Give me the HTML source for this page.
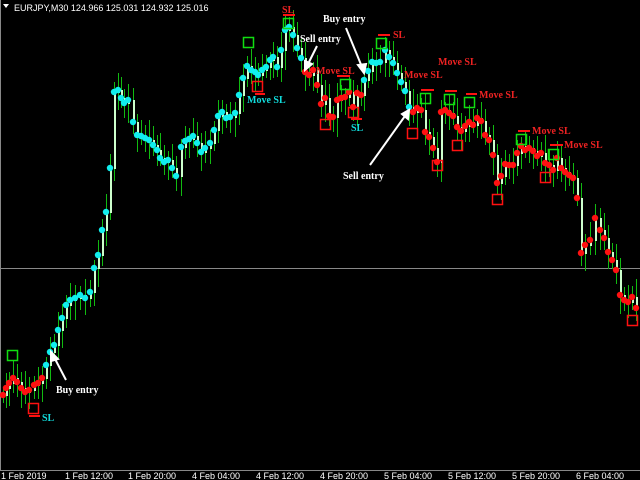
<!DOCTYPE html>
<html><head><meta charset="utf-8"><style>
html,body{margin:0;padding:0;background:#000;width:640px;height:480px;overflow:hidden}
svg{display:block}
.ax{font:9px "Liberation Sans",sans-serif;fill:#fff}
.lb{font:bold 10px "Liberation Serif",serif}
</style></head><body>
<svg id="s" width="640" height="480" xmlns="http://www.w3.org/2000/svg">
<rect width="640" height="480" fill="#000"/>
<line x1="0.5" y1="0" x2="0.5" y2="470" stroke="#888"/>
<line x1="0" y1="470.5" x2="640" y2="470.5" stroke="#888"/>
<line x1="0" y1="268.5" x2="640" y2="268.5" stroke="#888"/>
<g id="c"></g>
<polygon points="3,4 9,4 6,8" fill="#fff"/>
<text x="14" y="11" class="ax">EURJPY,M30  124.966 125.031 124.932 125.016</text>
<g class="ax">
<text x="1" y="479">1 Feb 2019</text><text x="65" y="479">1 Feb 12:00</text><text x="128" y="479">1 Feb 20:00</text>
<text x="192" y="479">4 Feb 04:00</text><text x="256" y="479">4 Feb 12:00</text><text x="320" y="479">4 Feb 20:00</text>
<text x="384" y="479">5 Feb 04:00</text><text x="448" y="479">5 Feb 12:00</text><text x="512" y="479">5 Feb 20:00</text>
<text x="576" y="479">6 Feb 04:00</text>
</g>
<g fill="none" stroke="#1d1" stroke-width="1.5">
<rect x="7.5" y="350.5" width="10" height="10"/><rect x="243.5" y="37.5" width="10" height="10"/><rect x="283.5" y="18.5" width="10" height="10"/>
<rect x="340.5" y="79.5" width="10" height="10"/><rect x="376.5" y="38.5" width="10" height="10"/><rect x="420.5" y="93.5" width="10" height="10"/>
<rect x="444.5" y="94.5" width="10" height="10"/><rect x="464.5" y="97.5" width="10" height="10"/><rect x="516.5" y="134.5" width="10" height="10"/>
<rect x="548.5" y="149.5" width="10" height="10"/>
</g>
<g fill="none" stroke="#f11" stroke-width="1.5">
<rect x="28.5" y="403.5" width="10" height="10"/><rect x="252.5" y="81.5" width="10" height="10"/><rect x="320.5" y="119.5" width="10" height="10"/>
<rect x="348.5" y="107.5" width="10" height="10"/><rect x="407.5" y="128.5" width="10" height="10"/><rect x="432.5" y="160.5" width="10" height="10"/>
<rect x="452.5" y="140.5" width="10" height="10"/><rect x="492.5" y="194.5" width="10" height="10"/><rect x="540.5" y="172.5" width="10" height="10"/>
<rect x="627.5" y="315.5" width="10" height="10"/>
</g>
<g stroke="#f11" stroke-width="2">
<line x1="29" y1="416" x2="40" y2="416"/><line x1="255" y1="94" x2="265" y2="94"/><line x1="283" y1="15" x2="295" y2="15"/>
<line x1="337" y1="76" x2="350" y2="76"/><line x1="351" y1="119" x2="362" y2="119"/><line x1="378" y1="35" x2="390" y2="35"/>
<line x1="421" y1="90" x2="434" y2="90"/><line x1="445" y1="91" x2="457" y2="91"/><line x1="466" y1="94" x2="477" y2="94"/>
<line x1="518" y1="131" x2="530" y2="131"/><line x1="550" y1="145" x2="563" y2="145"/>
</g>
<g class="lb" fill="#e22">
<text x="282" y="13">SL</text><text x="393" y="38">SL</text><text x="316" y="74">Move SL</text>
<text x="404" y="78">Move SL</text><text x="438" y="65">Move SL</text><text x="479" y="98">Move SL</text>
<text x="532" y="134">Move SL</text><text x="564" y="148">Move SL</text>
</g>
<g class="lb" fill="#1dd">
<text x="42" y="421">SL</text><text x="247" y="103">Move SL</text><text x="351" y="131">SL</text>
</g>
<g class="lb" fill="#fff">
<text x="56" y="393">Buy entry</text><text x="323" y="22">Buy entry</text><text x="300" y="42">Sell entry</text><text x="343" y="179">Sell entry</text>
</g>
<g stroke="#fff" stroke-width="2" fill="#fff">
<line x1="66" y1="380" x2="54" y2="357"/><polygon points="51,352 58,359 51,361"/>
<line x1="346" y1="28" x2="362" y2="67"/><polygon points="364,73 358,65 366,64"/>
<line x1="317" y1="46" x2="308" y2="64"/><polygon points="305,70 305,61 312,64"/>
<line x1="370" y1="165" x2="405" y2="116"/><polygon points="409,110 402,114 408,119"/>
</g>
</svg>
<script>
var P=[[3,395,'r'],[6,388,'r'],[9,383,'r'],[13,378,'r'],[17,382,'r'],[21,388,'r'],[25,392,'r'],[29,390,'r'],[34,385,'r'],[38,383,'r'],[42,378,'r'],
[46,365,'c'],[50,352,'c'],[54,345,'c'],[58,330,'c'],[62,318,'c'],[66,305,'c'],[70,300,'c'],[75,298,'c'],[80,295,'c'],[85,298,'c'],[90,292,'c'],[94,268,'c'],[98,255,'c'],[102,230,'c'],[106,212,'c'],[110,168,'c'],[114,92,'c'],[118,90,'c'],[121,98,'c'],[124,103,'c'],[128,100,'c'],
[133,122,'c'],[137,135,'c'],[141,136,'c'],[145,138,'c'],[149,140,'c'],[153,145,'c'],[157,150,'c'],[160,158,'c'],[164,162,'c'],[168,160,'c'],[172,168,'c'],[176,176,'c'],
[181,147,'c'],[185,141,'c'],[189,139,'c'],[193,136,'c'],[197,143,'c'],[201,152,'c'],[205,148,'c'],[210,143,'c'],[214,130,'c'],[218,116,'c'],[222,112,'c'],[226,118,'c'],[230,117,'c'],[235,113,'c'],[239,95,'c'],[243,78,'c'],[247,66,'c'],[251,70,'c'],[255,72,'c'],[258,75,'c'],[262,70,'c'],[266,67,'c'],[270,60,'c'],[273,57,'c'],[277,67,'c'],[281,50,'c'],[285,30,'c'],[289,27,'c'],[293,35,'c'],[297,48,'c'],[301,58,'c'],
[305,72,'r'],[309,75,'r'],[313,70,'r'],[317,85,'r'],[321,104,'r'],[325,98,'r'],[329,116,'r'],[333,117,'r'],[337,100,'r'],[341,98,'r'],[345,97,'r'],[349,92,'r'],[353,107,'r'],[357,93,'r'],[361,95,'r'],
[364,80,'c'],[368,71,'c'],[372,62,'c'],[376,63,'c'],[380,62,'c'],[385,50,'c'],[389,57,'c'],[393,63,'c'],[397,73,'c'],[401,82,'c'],[405,91,'c'],[409,107,'c'],
[413,112,'r'],[417,108,'r'],[421,110,'r'],[425,132,'r'],[429,137,'r'],[433,148,'r'],[437,162,'r'],[441,112,'r'],[445,110,'r'],[449,113,'r'],[453,116,'r'],[457,127,'r'],[461,131,'r'],[465,126,'r'],[469,122,'r'],[473,125,'r'],[477,118,'r'],[481,121,'r'],[485,135,'r'],[489,140,'r'],[493,155,'r'],[497,183,'r'],[501,176,'r'],[505,164,'r'],[509,165,'r'],[513,165,'r'],[517,153,'r'],[521,146,'r'],[525,150,'r'],[529,148,'r'],[533,151,'r'],[537,156,'r'],[541,153,'r'],[545,163,'r'],[549,165,'r'],[553,170,'r'],[557,158,'r'],[561,168,'r'],[565,172,'r'],[569,175,'r'],[573,178,'r'],[577,198,'r'],[581,253,'r'],[585,245,'r'],[590,240,'r'],[595,218,'r'],[600,230,'r'],[604,238,'r'],[608,252,'r'],[612,260,'r'],[616,270,'r'],[620,295,'r'],[624,300,'r'],[628,302,'r'],[632,297,'r'],[636,308,'r']];
var g=document.getElementById('c'),h='';
for(var i=0;i<P.length;i++){var x=P[i][0],y=P[i][1],py=i?P[i-1][1]:y;
var a=Math.min(y,py)-8-(i*7%11),b=Math.max(y,py)+8+(i*5%13);
h+='<line x1="'+(x+0.5)+'" y1="'+a+'" x2="'+(x+0.5)+'" y2="'+b+'" stroke="#1b1" stroke-width="1"/>';
h+='<rect x="'+x+'" y="'+Math.min(y,py)+'" width="2" height="'+(Math.abs(y-py)+1)+'" fill="#cfc"/>';}
for(var i=0;i<P.length;i++){h+='<circle cx="'+P[i][0]+'" cy="'+P[i][1]+'" r="3.2" fill="'+(P[i][2]=='c'?'#1ee':'#f11')+'"/>';}
g.innerHTML=h;
</script>
</body></html>
